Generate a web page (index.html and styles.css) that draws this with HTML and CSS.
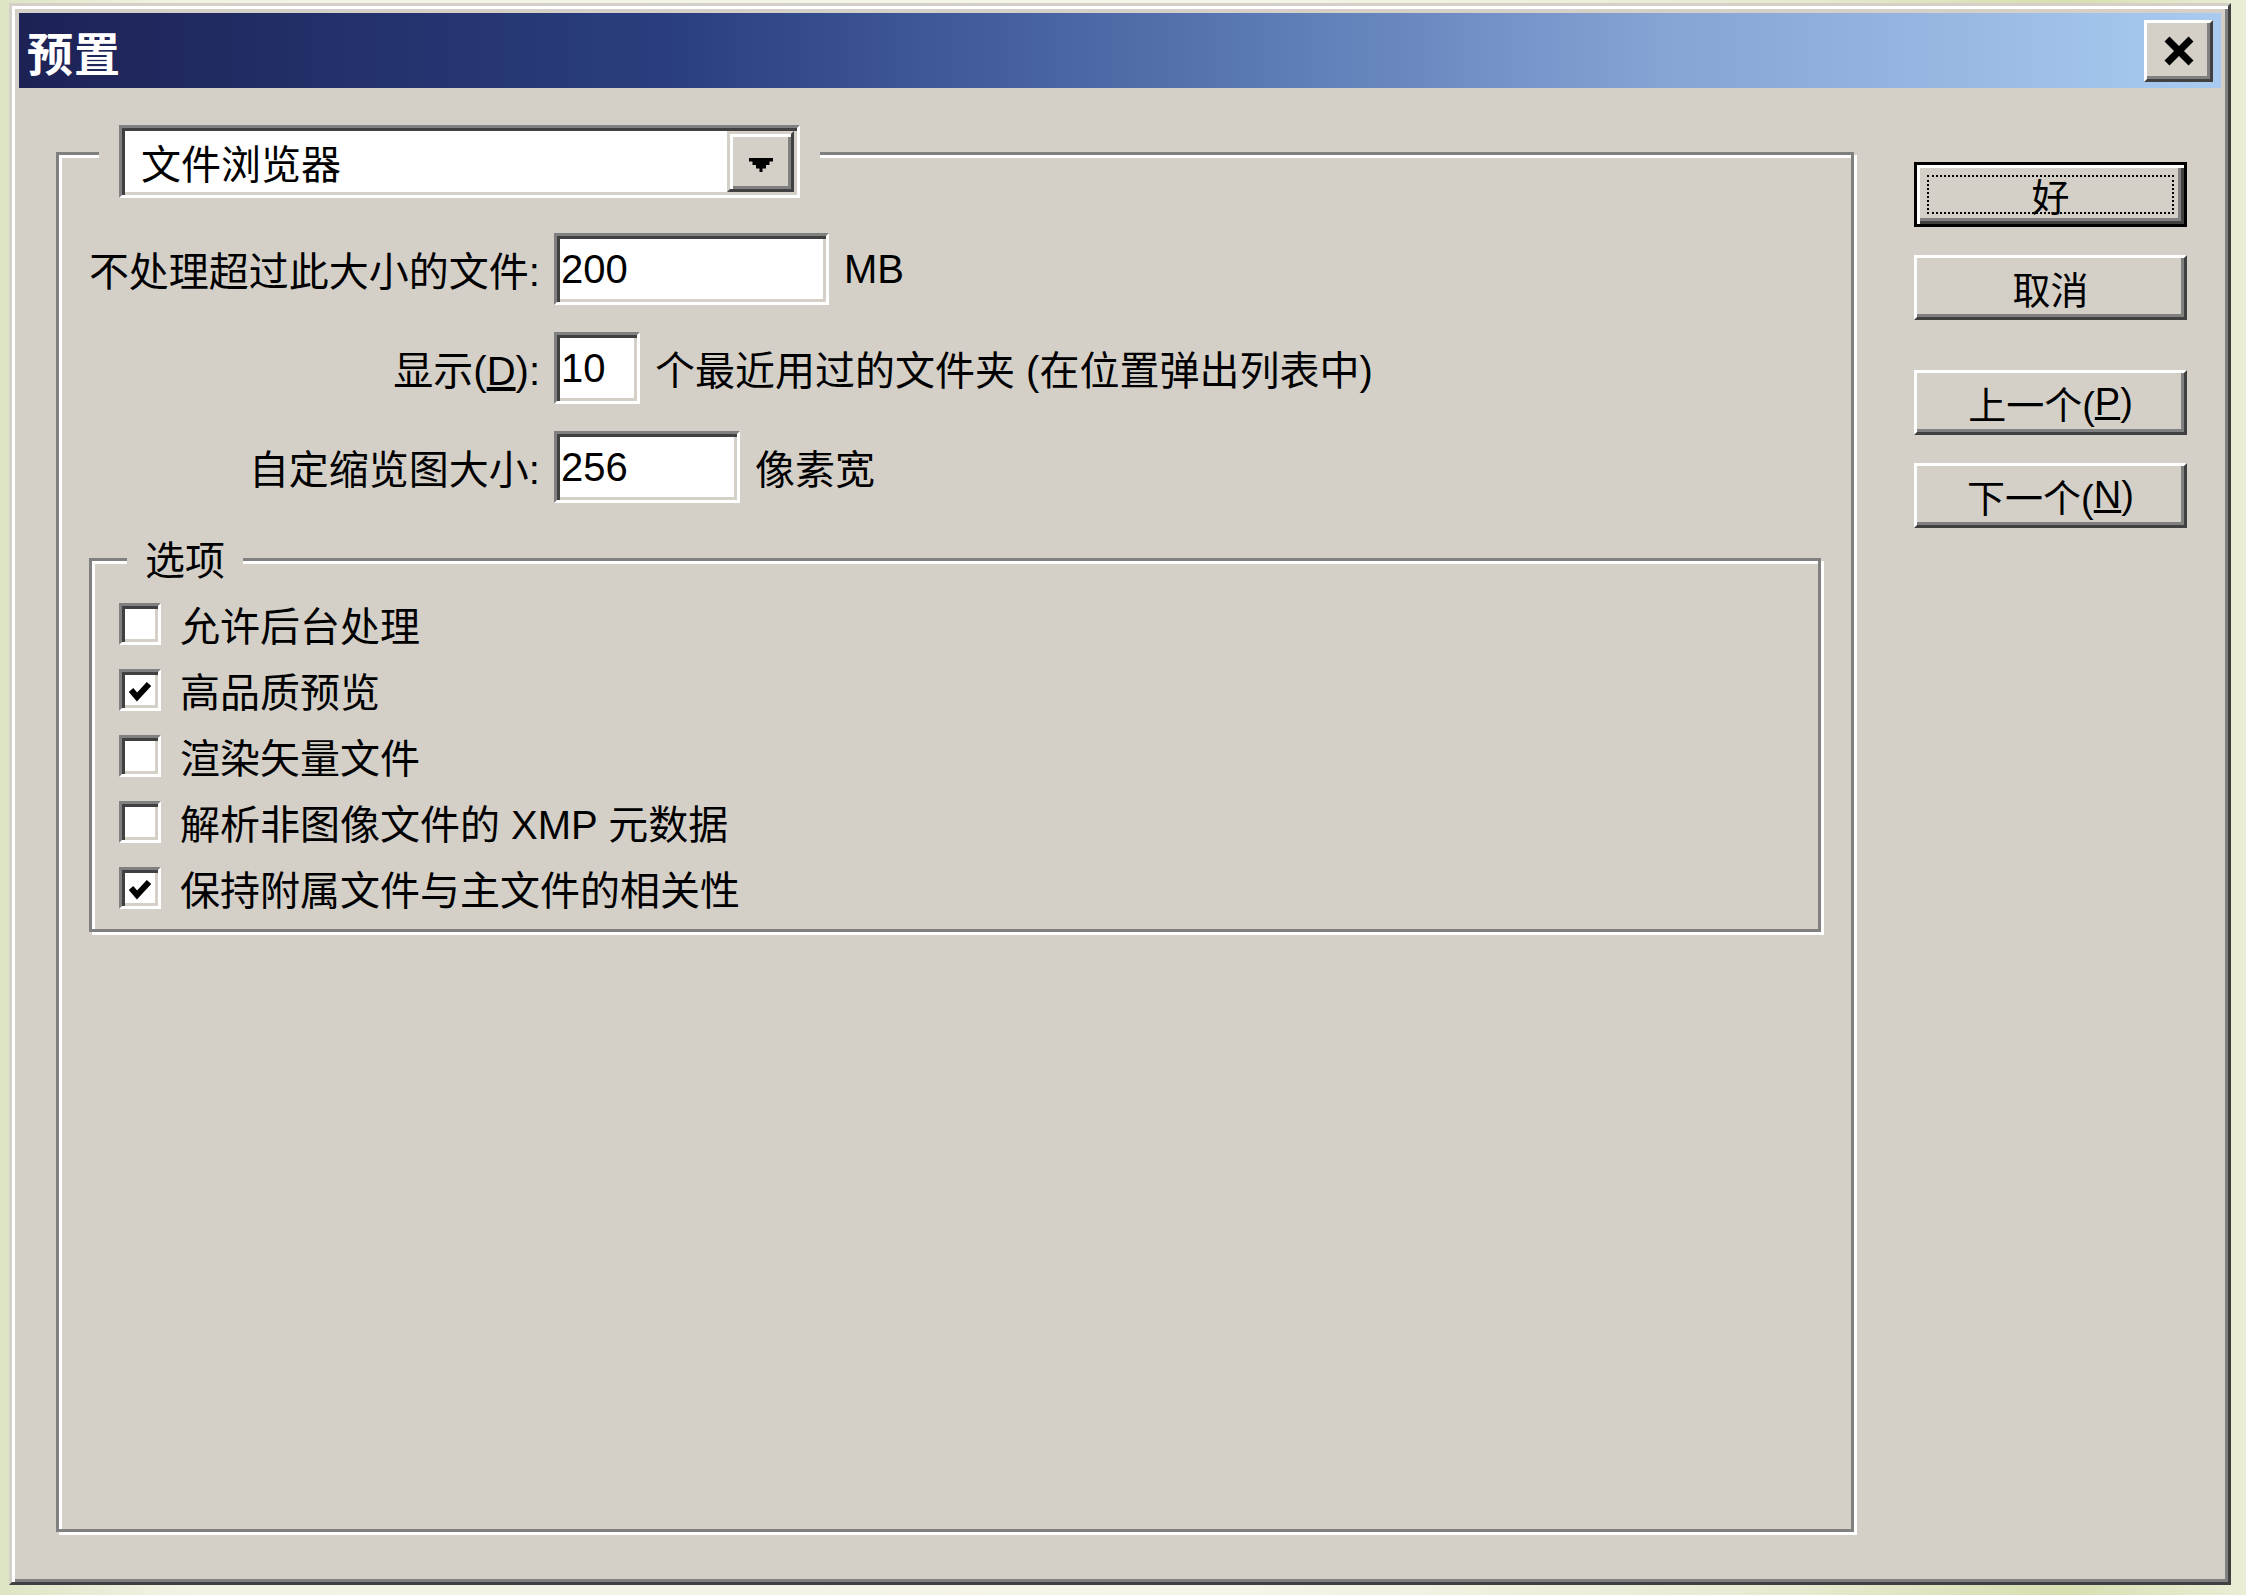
FILE: index.html
```html
<!DOCTYPE html>
<html lang="zh-CN">
<head>
<meta charset="utf-8">
<title>预置</title>
<link rel="stylesheet" href="styles.css">
</head>
<body>
<div class="dialog">
  <div class="titlebar">
    <span class="title">预置</span>
    <div class="close">
      <svg width="32" height="30" viewBox="0 0 32 30"><path d="M4 3 L28 27 M28 3 L4 27" stroke="#000" stroke-width="7" fill="none"/></svg>
    </div>
  </div>
  <div class="dlg-body">
    <div class="group main-group">
      <div class="legend-combo">
        <div class="combo">
          <span class="combo-text">文件浏览器</span>
          <span class="combo-btn">
            <svg width="24" height="14" viewBox="0 0 24 14"><path d="M0 0H24V3.5H20.5V7H17V10.5H13.5V14H10.5V10.5H7V7H3.5V3.5H0Z" fill="#000"/></svg>
          </span>
        </div>
      </div>
      <div class="fields">
        <div class="flabel">不处理超过此大小的文件:</div>
        <div class="fctl"><span class="field w-large">200</span><span class="suffix">MB</span></div>
        <div class="flabel">显示(<u>D</u>):</div>
        <div class="fctl"><span class="field w-small">10</span><span class="suffix">个最近用过的文件夹 (在位置弹出列表中)</span></div>
        <div class="flabel">自定缩览图大小:</div>
        <div class="fctl"><span class="field w-mid">256</span><span class="suffix">像素宽</span></div>
      </div>
      <div class="group options">
        <span class="legend">选项</span>
        <div class="check-row"><span class="cb"></span><span>允许后台处理</span></div>
        <div class="check-row"><span class="cb"><svg class="tick" width="22" height="22" viewBox="0 0 22 22"><path d="M2 10 L8 17 L20 4" stroke="#000" stroke-width="6" fill="none"/></svg></span><span>高品质预览</span></div>
        <div class="check-row"><span class="cb"></span><span>渲染矢量文件</span></div>
        <div class="check-row"><span class="cb"></span><span>解析非图像文件的 XMP 元数据</span></div>
        <div class="check-row"><span class="cb"><svg class="tick" width="22" height="22" viewBox="0 0 22 22"><path d="M2 10 L8 17 L20 4" stroke="#000" stroke-width="6" fill="none"/></svg></span><span>保持附属文件与主文件的相关性</span></div>
      </div>
    </div>
    <div class="buttons">
      <div class="btn default"><span class="focus">好</span></div>
      <div class="btn">取消</div>
      <div class="btn btn-gap">上一个(<u>P</u>)</div>
      <div class="btn">下一个(<u>N</u>)</div>
    </div>
  </div>
</div>
</body>
</html>
```
FILE: styles.css
```css
html, body {
  margin: 0;
  padding: 0;
}

body {
  width: 2246px;
  height: 1595px;
  overflow: hidden;
  background: linear-gradient(to right, #dde5c4 0%, #f3f3e4 8%, #f6f5e9 55%, #e6ead0 80%, #d6dfb0 92%, #e9eed6 100%);
  font-family: "Liberation Sans", "Noto Sans CJK SC", sans-serif;
  color: #000;
}

.dialog {
  box-sizing: border-box;
  position: relative;
  top: 3px;
  left: 9px;
  width: 2222px;
  height: 1582px;
  background: #d4d0c8;
  border: 3px solid;
  border-color: #d4d0c8 #404040 #404040 #d4d0c8;
  box-shadow: inset 3px 3px 0 #fff, inset -3px -3px 0 #808080;
  padding: 7px;
  display: flex;
  flex-direction: column;
}

.titlebar {
  height: 75px;
  flex: none;
  display: flex;
  align-items: center;
  justify-content: space-between;
  padding: 0 8px;
  background: linear-gradient(to right, #1d2255 0%, #2a3f80 30%, #5876b2 55%, #86a4d4 75%, #a9cbf0 100%);
}

.title {
  color: #fff;
  font-family: "Noto Sans CJK SC", sans-serif;
  font-weight: 700;
  font-size: 46px;
  line-height: 1;
  letter-spacing: 1px;
}

.close {
  box-sizing: border-box;
  width: 69px;
  height: 62px;
  background: #d4d0c8;
  border: 3px solid;
  border-color: #fff #404040 #404040 #fff;
  box-shadow: inset -3px -3px 0 #808080;
  display: flex;
  align-items: center;
  justify-content: center;
}

.dlg-body {
  flex: 1;
  display: flex;
  align-items: flex-start;
  padding: 64px 34px 0 37px;
}

.group {
  position: relative;
  box-sizing: border-box;
  border: 3px solid #808080;
  box-shadow: inset 3px 3px 0 #fff, 3px 3px 0 #fff;
}

.main-group {
  flex: none;
  width: 1798px;
  height: 1380px;
  padding-top: 78px;
}

.legend-combo {
  position: absolute;
  left: 40px;
  top: -30px;
  padding: 0 20px;
  background: #d4d0c8;
}

.combo {
  box-sizing: border-box;
  width: 681px;
  height: 73px;
  border: 3px solid;
  border-color: #808080 #fff #fff #808080;
  box-shadow: inset 3px 3px 0 #404040, inset -3px -3px 0 #d4d0c8;
  background: #fff;
  padding: 3px;
  display: flex;
  align-items: stretch;
}

.combo-text {
  flex: 1;
  display: flex;
  align-items: center;
  padding-left: 16px;
  font-size: 40px;
}

.combo-btn {
  box-sizing: border-box;
  width: 67px;
  border: 3px solid;
  border-color: #d4d0c8 #404040 #404040 #d4d0c8;
  box-shadow: inset 3px 3px 0 #fff, inset -3px -3px 0 #808080;
  background: #d4d0c8;
  display: flex;
  align-items: center;
  justify-content: center;
  padding-top: 6px;
}

.fields {
  display: grid;
  grid-template-columns: 481px auto;
  column-gap: 14px;
  row-gap: 27px;
  align-items: center;
  justify-content: start;
  font-size: 40px;
}

.flabel {
  text-align: right;
  white-space: nowrap;
}

.fctl {
  display: flex;
  align-items: center;
  gap: 15px;
  white-space: nowrap;
}

.field {
  box-sizing: border-box;
  height: 72px;
  border: 3px solid;
  border-color: #808080 #fff #fff #808080;
  box-shadow: inset 3px 3px 0 #404040, inset -3px -3px 0 #d4d0c8;
  background: #fff;
  padding: 0 3px 0 4px;
  display: flex;
  align-items: center;
  font-size: 40px;
}

.w-large { width: 275px; }
.w-small { width: 86px; }
.w-mid { width: 186px; }

.options {
  margin: 55px 30px 0;
  height: 374px;
  padding: 42px 0 0 27px;
}

.legend {
  position: absolute;
  left: 35px;
  top: -20px;
  padding: 0 18px;
  background: #d4d0c8;
  font-size: 40px;
  line-height: 40px;
}

.check-row {
  display: flex;
  align-items: center;
  height: 42px;
  margin-bottom: 24px;
  font-size: 40px;
  white-space: nowrap;
}

.cb {
  box-sizing: border-box;
  flex: none;
  width: 42px;
  height: 42px;
  border: 3px solid;
  border-color: #808080 #fff #fff #808080;
  box-shadow: inset 3px 3px 0 #404040, inset -3px -3px 0 #d4d0c8;
  background: #fff;
  margin-right: 19px;
  display: flex;
  align-items: center;
  justify-content: center;
}

.tick {
  margin-top: 2px;
}

.buttons {
  flex: none;
  width: 273px;
  margin-left: 60px;
  margin-top: 10px;
  display: flex;
  flex-direction: column;
  gap: 28px;
}

.btn {
  box-sizing: border-box;
  height: 65px;
  border: 3px solid;
  border-color: #fff #404040 #404040 #fff;
  box-shadow: inset -3px -3px 0 #808080;
  background: #d4d0c8;
  display: flex;
  align-items: center;
  justify-content: center;
  font-size: 38px;
  white-space: nowrap;
}

.btn.default {
  border-color: #000;
  box-shadow: inset 3px 3px 0 #fff, inset -3px -3px 0 #404040, inset -6px -6px 0 #808080;
  padding: 10px;
  align-items: stretch;
}

.focus {
  flex: 1;
  border: 2px dotted #000;
  display: flex;
  align-items: center;
  justify-content: center;
}

.btn-gap {
  margin-top: 22px;
}
```
